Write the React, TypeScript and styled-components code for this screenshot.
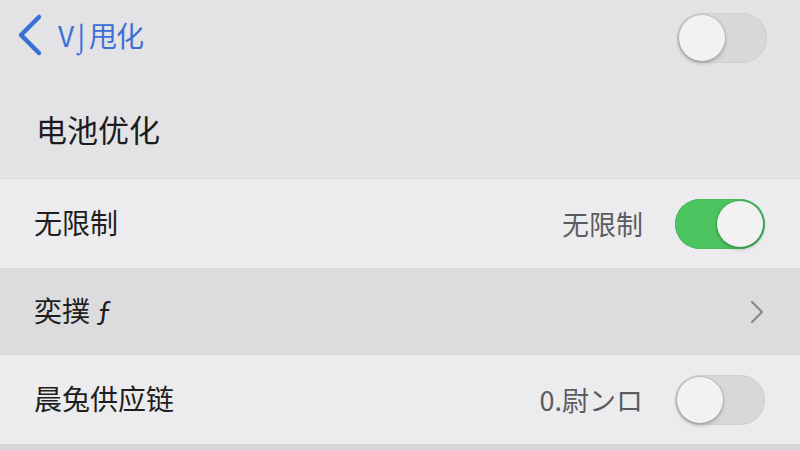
import styled, { createGlobalStyle } from 'styled-components';

type SwitchProps = {
  $on?: boolean;
};

type RowProps = {
  $tone: 'light' | 'dark';
};

const GlobalStyle = createGlobalStyle`
  html, body {
    margin: 0;
    padding: 0;
    background: #d9d9dc;
  }

  body {
    font-family: "Noto Sans CJK SC", "Noto Sans", sans-serif;
    -webkit-font-smoothing: antialiased;
  }
`;

const Toggle = ({ on = false }: { on?: boolean }) => (
  <Track $on={on}>
    <Knob $on={on} />
  </Track>
);

const App = () => {
  return (
    <>
      <GlobalStyle />
      <Screen>
        <NavBar>
          <BackButton>
            <svg width="28" height="44" viewBox="0 0 28 44" fill="none">
              <path
                d="M23 4 L5 22 L23 40"
                stroke="#3b6fd8"
                strokeWidth="4.5"
                strokeLinecap="round"
                strokeLinejoin="round"
              />
            </svg>
            <BackLabel>V⌡甩化</BackLabel>
          </BackButton>
          <Toggle />
        </NavBar>

        <PageTitle>电池优化</PageTitle>

        <Row $tone="light">
          <Label>无限制</Label>
          <Trailing>
            <Value>无限制</Value>
            <Toggle on />
          </Trailing>
        </Row>

        <Row $tone="dark">
          <Label>奕撲 ƒ</Label>
          <Trailing>
            <svg width="16" height="26" viewBox="0 0 16 26" fill="none">
              <path
                d="M3 3 L13 13 L3 23"
                stroke="#8c8c90"
                strokeWidth="2.4"
                strokeLinecap="round"
                strokeLinejoin="round"
              />
            </svg>
          </Trailing>
        </Row>

        <Row $tone="light">
          <Label>晨兔供应链</Label>
          <Trailing>
            <Value>0.尉ンロ</Value>
            <Toggle />
          </Trailing>
        </Row>

        <BottomEdge />
      </Screen>
    </>
  );
};

const Screen = styled.div`
  width: 800px;
  height: 450px;
  overflow: hidden;
  display: flex;
  flex-direction: column;
  background: #e4e4e6;
`;

const NavBar = styled.div`
  height: 76px;
  display: flex;
  align-items: center;
  justify-content: space-between;
  padding: 0 33px 0 16px;
  box-sizing: border-box;
  background: #e3e3e5;
`;

const BackButton = styled.div`
  display: flex;
  align-items: center;
  gap: 14px;
  margin-top: -6px;
`;

const BackLabel = styled.span`
  font-size: 28px;
  color: #3b6fd8;
  letter-spacing: -1px;
`;

const PageTitle = styled.h1`
  margin: 0;
  height: 102px;
  display: flex;
  align-items: center;
  padding: 2px 0 0 36px;
  box-sizing: border-box;
  font-size: 31px;
  font-weight: 400;
  color: #1c1c1e;
  background: #e3e3e5;
`;

const Row = styled.div<RowProps>`
  display: flex;
  align-items: center;
  justify-content: space-between;
  height: ${({ $tone }) => ($tone === 'dark' ? '86px' : '90px')};
  padding: 0 35px 0 34px;
  box-sizing: border-box;
  background: ${({ $tone }) => ($tone === 'dark' ? '#dcdcdf' : '#ececee')};
  border-top: 1px solid #dadadc;
`;

const Label = styled.span`
  font-size: 28px;
  color: #1e1e20;
  margin-top: -3px;
`;

const Trailing = styled.div`
  display: flex;
  align-items: center;
  gap: 32px;
`;

const Value = styled.span`
  font-size: 27px;
  color: #5c5c60;
`;

const Track = styled.div<SwitchProps>`
  position: relative;
  width: 90px;
  height: 50px;
  border-radius: 25px;
  background: ${({ $on }) => ($on ? '#4cc561' : '#d8d8da')};
  box-shadow: inset 0 0 0 1px ${({ $on }) => ($on ? '#46b95a' : '#d0d0d2')};
`;

const Knob = styled.div<SwitchProps>`
  position: absolute;
  top: 2px;
  left: ${({ $on }) => ($on ? '42px' : '2px')};
  width: 46px;
  height: 46px;
  border-radius: 50%;
  background: #f2f2f3;
  box-shadow: 0 2px 4px rgba(0, 0, 0, 0.25), 0 0 0 1px rgba(0, 0, 0, 0.08);
`;

const BottomEdge = styled.div`
  flex: 1;
  background: #d6d6d9;
`;

export default App;
